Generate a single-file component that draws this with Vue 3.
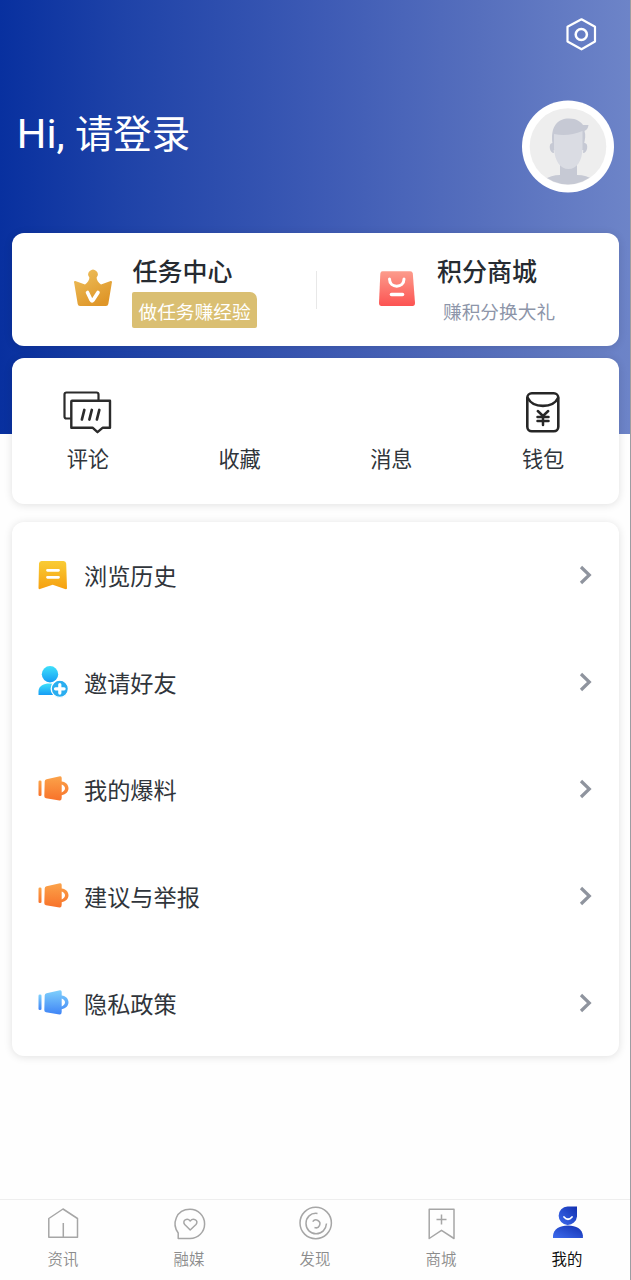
<script setup>
const shortcuts = [
  { label: '评论', icon: 'comment' },
  { label: '收藏', icon: '' },
  { label: '消息', icon: '' },
  { label: '钱包', icon: 'wallet' },
]
const rows = [
  { label: '浏览历史', icon: 'history' },
  { label: '邀请好友', icon: 'invite' },
  { label: '我的爆料', icon: 'cup', fill: 'url(#orange)' },
  { label: '建议与举报', icon: 'cup', fill: 'url(#orange)' },
  { label: '隐私政策', icon: 'cup', fill: 'url(#sky)' },
]
const tabs = [
  { label: '资讯', icon: 'home' },
  { label: '融媒', icon: 'heart' },
  { label: '发现', icon: 'discover' },
  { label: '商城', icon: 'shop' },
  { label: '我的', icon: 'me', active: true },
]
</script>

<template>
  <div class="page">
    <svg class="defs" width="0" height="0">
      <defs>
        <linearGradient id="gold" x1="0" y1="0" x2=".6" y2="1"><stop offset="0" stop-color="#eec15f" /><stop offset="1" stop-color="#df9628" /></linearGradient>
        <linearGradient id="coral" x1="0" y1="0" x2="0" y2="1"><stop offset="0" stop-color="#fc9c8c" /><stop offset="1" stop-color="#fc5352" /></linearGradient>
        <linearGradient id="yellow" x1="0" y1="0" x2="0" y2="1"><stop offset="0" stop-color="#f9cc35" /><stop offset="1" stop-color="#f6a010" /></linearGradient>
        <linearGradient id="cyan" x1="0" y1="0" x2="0" y2="1"><stop offset="0" stop-color="#3fe0fa" /><stop offset="1" stop-color="#169cf5" /></linearGradient>
        <linearGradient id="orange" x1="0" y1="0" x2="0" y2="1"><stop offset="0" stop-color="#fba34a" /><stop offset="1" stop-color="#f8722a" /></linearGradient>
        <linearGradient id="sky" x1="0" y1="0" x2="0" y2="1"><stop offset="0" stop-color="#7fd0fc" /><stop offset="1" stop-color="#3f84f6" /></linearGradient>
        <linearGradient id="royal" x1="0" y1="1" x2="1" y2="0"><stop offset="0" stop-color="#3e6cee" /><stop offset="1" stop-color="#1230b0" /></linearGradient>
      </defs>
    </svg>

    <header class="top">
      <svg class="gear" width="34" height="36" viewBox="0 0 34 36" fill="none" stroke="#fff">
        <path d="M17.500 3.300 31 10.800V25.500L17.500 33.300 3.500 25.500V10.800Z" stroke-width="2.200" stroke-linejoin="round" />
        <circle cx="17.300" cy="18.500" r="5.600" stroke-width="2.500" />
      </svg>
      <div class="profile">
        <h1><span class="latin">Hi, </span>请登录</h1>
        <svg class="avatar" width="93" height="93" viewBox="0 0 93 93">
          <defs><clipPath id="face"><circle cx="46" cy="46.500" r="38" /></clipPath></defs>
          <circle cx="46" cy="46.500" r="46" fill="#fff" />
          <circle cx="46" cy="46.500" r="38.300" fill="#eee" />
          <g clip-path="url(#face)">
            <path d="M38 64H55V75Q65 75 71 80V86H22V80Q29 75 38 75Z" fill="#c6c9d4" />
            <path d="M31 43C26 42 27 53 32 53M62 43C67 42 66 53 61 53" fill="#c6c9d4" />
            <path d="M30.500 44C28 26 36 18.500 47 18.500C55 18.500 59 22 61 25H66.500C66 29 64 30 62.500 31C64 35 63 40 62 44V50H31V44Z" fill="#c6c9d4" />
            <path d="M32 34Q46 37 60.500 31V49C60 61 55 69 46.500 69S33 61 32 49Z" fill="#dadce3" />
          </g>
        </svg>
      </div>
    </header>

    <section class="card promo">
      <div class="promo-item">
        <svg class="promo-icon" width="40" height="40" viewBox="0 0 40 40">
          <path d="M1.200 15C.5 13.500 1.500 12.500 3 13.300L12 16.500C14.500 14.500 16.600 12 16.400 9.500A4.700 4.700 0 1 1 23.600 9.500C23.400 12 25.500 14.500 28 16.500L37 13.300C38.500 12.500 39.500 13.500 38.800 15L35.300 36Q35 38 33 38H7Q5 38 4.700 36Z" fill="url(#gold)" />
          <path d="M14.500 24.500 18.200 32.200Q19 33.600 20 32.200L25 24.500" fill="none" stroke="#fff" stroke-width="3.600" stroke-linecap="round" stroke-linejoin="round" />
        </svg>
        <div class="promo-text">
          <strong>任务中心</strong>
          <span class="badge">做任务赚经验</span>
        </div>
      </div>
      <div class="divider"></div>
      <div class="promo-item second">
        <svg class="promo-icon" width="40" height="40" viewBox="0 0 40 40">
          <path d="M5.500 3.300H33.300Q35.500 3.300 35.800 5.500L38 35Q38 38 35.500 38H4.500Q2 38 2 35L3.300 5.700Q3.500 3.300 5.500 3.300Z" fill="url(#coral)" />
          <path d="M12.500 11C12.500 20.500 27 20.500 27 11" fill="none" stroke="#fff" stroke-width="3" stroke-linecap="round" />
          <path d="M14.500 26.500H25.500" stroke="#fff" stroke-width="3.600" stroke-linecap="round" />
        </svg>
        <div class="promo-text">
          <strong>积分商城</strong>
          <span class="badge plain">赚积分换大礼</span>
        </div>
      </div>
    </section>

    <section class="card shortcuts">
      <div v-for="s in shortcuts" :key="s.label" class="shortcut">
        <div class="shortcut-icon">
          <svg v-if="s.icon === 'comment'" width="52" height="46" viewBox="0 0 52 46" fill="none" stroke="#2b2b2b" stroke-width="2.200">
            <path d="M8.800 29.500H4.500Q2.500 29.500 2.500 27.500V5.500Q2.500 3.500 4.500 3.500H34.500Q36.500 3.500 36.500 5.500V11" />
            <path d="M10 11.800H48V38.700H40.800L35.500 43.200 30.500 38.700H9.300V12.500Q9.300 11.800 10 11.800Z" stroke-width="2.400" stroke-linejoin="round" />
            <path d="M22.300 21 19.900 30.500M29.800 21 27.400 30.500M37.300 21 34.900 30.500" stroke-width="2.700" stroke-linecap="round" />
          </svg>
          <svg v-else-if="s.icon === 'wallet'" width="36" height="46" viewBox="0 0 36 46" fill="none" stroke="#262626" stroke-width="2.600" stroke-linecap="round">
            <rect x="2.300" y="4.300" width="31" height="38" rx="4.500" />
            <path d="M2.800 9C8 19.500 28 19.500 33 9" />
            <path d="M12.800 22 18 27 23.200 22M18 27V36M12.500 28H23.500M12.500 32H23.500" stroke-width="2.500" />
          </svg>
        </div>
        <span>{{ s.label }}</span>
      </div>
    </section>

    <section class="card list">
      <div v-for="r in rows" :key="r.label" class="row">
        <svg class="row-icon" width="32" height="34" viewBox="0 0 32 34">
          <g v-if="r.icon === 'history'">
            <path d="M4.500 3H26.500Q29 3 29.200 5.500L30 30.500Q29.500 31.500 28 31L15.700 26.800 3 31Q1.500 31.500 1.500 30L2 5.500Q2.200 3 4.500 3Z" fill="url(#yellow)" />
            <path d="M10.500 12.300H21.500M10.500 19.300H21.500" stroke="#fff" stroke-width="2.800" stroke-linecap="round" />
          </g>
          <g v-else-if="r.icon === 'invite'">
            <circle cx="13" cy="9.300" r="8.200" fill="url(#cyan)" />
            <path d="M1.500 30V26C2 20.500 7 18.500 12 18.500C17 18.500 20 19.500 22 22V30Z" fill="url(#cyan)" />
            <circle cx="22.800" cy="23.800" r="8.600" fill="#2aaef0" stroke="#fff" stroke-width="1.300" />
            <path d="M22.800 19.500V28.100M18.500 23.800H27.100" stroke="#fff" stroke-width="3.200" stroke-linecap="round" />
          </g>
          <g v-else :fill="r.fill">
            <rect x="1.500" y="8.500" width="3" height="15.500" rx="1.300" />
            <path d="M9.500 7.200 23 4.200Q24.700 4 24.700 6V9.500C29 10 31.500 13 31.500 16.300S29 22.500 24.700 23.300V26Q24.500 28.800 22.500 28.500L9 26.300Q7.200 26 7.300 24L7.700 9.500Q7.800 7.600 9.500 7.200ZM24.700 12.400V20.400C27 19.500 28 18 28 16.300S27 13.300 24.700 12.400Z" fill-rule="evenodd" />
          </g>
        </svg>
        <span class="row-label">{{ r.label }}</span>
        <svg class="chevron" width="14" height="20" viewBox="0 0 14 20" fill="none" stroke="#8f949e" stroke-width="3.200">
          <path d="M2 2 10.300 10 2 18" />
        </svg>
      </div>
    </section>

    <nav class="tabs">
      <div v-for="t in tabs" :key="t.label" class="tab" :class="{ active: t.active }">
        <svg width="36" height="36" viewBox="0 0 36 36" fill="none" stroke="#a6a6a6" stroke-width="1.500" stroke-linejoin="round">
          <path v-if="t.icon === 'home'" d="M3.800 12.500 18 3 32.500 12.500V31.200H3.800ZM18.300 31V17" />
          <g v-else-if="t.icon === 'heart'">
            <path d="M7.200 32.500V27C.5 18 5 3.300 19 3.300A14.600 14.600 0 0 1 19 32.500Z" />
            <path d="M19.200 24 13.700 18.500C10.700 14.500 16.200 11.500 19.200 15C22.200 11.500 28.200 14.500 25 18.500Z" />
          </g>
          <g v-else-if="t.icon === 'discover'">
            <circle cx="18.700" cy="17" r="15.700" />
            <path d="M20.500 7.500C13.500 6.500 9 11.500 9 17.500C9 23.500 13.500 27.800 19 27.800C25 27.800 29 23.500 29.500 17.500M15.700 15.700A3.900 3.900 0 1 1 17.500 21.500" />
          </g>
          <path v-else-if="t.icon === 'shop'" d="M6.200 3.300H31V32.500L18.500 24.300 6.200 32.500ZM18.500 8.500V18.500M13.500 13.500H23.500" />
          <g v-else stroke="none" fill="url(#royal)">
            <path d="M18.500 .5H28V10.500A9.200 9.200 0 1 1 18.500 .5Z" />
            <path d="M4 32V29.500C4.700 23 10.700 19.500 19 19.500S33.200 23 33.900 29.500V32Z" />
            <path d="M15 11Q19 15.500 23 11" fill="none" stroke="#fff" stroke-width="1.800" stroke-linecap="round" />
          </g>
        </svg>
        <span>{{ t.label }}</span>
      </div>
    </nav>
  </div>
</template>

<style>
body { margin: 0; }
</style>

<style scoped>
.page {
  box-sizing: border-box;
  width: 631px;
  height: 1280px;
  display: flex;
  flex-direction: column;
  overflow: hidden;
  border-right: 1px solid #9c9da2;
  font-family: "Noto Sans CJK SC", sans-serif;
  color: #30353b;
  background: #fefefe linear-gradient(90deg, #08309f 0%, #1f43a8 20%, #3e5bb5 52%, #566fbd 76%, #6d84c8 100%) 0 0 / 100% 434px no-repeat;
}
.defs { position: absolute; }
.top {
  height: 233px;
  box-sizing: border-box;
  padding: 16px 15px 0 16px;
  display: flex;
  flex-direction: column;
}
.gear { align-self: flex-end; margin-right: 17px; }
.profile { display: flex; justify-content: space-between; margin-top: 48px; }
h1 { margin: 3px 0 0 .8px; font-size: 38.4px; font-weight: 400; line-height: 56px; color: #fff; }
.latin { font-family: Roboto, sans-serif; font-size: 41.500px; line-height: 1; }
.card {
  flex: none;
  box-sizing: border-box;
  margin: 0 11px 0 12px;
  border-radius: 12px;
  background: #fff;
  box-shadow: 0 1px 9px rgba(0, 0, 0, .12);
}
.promo { height: 113px; display: flex; align-items: center; }
.promo-item { flex: 1; display: flex; align-items: center; padding-left: 61px; }
.promo-item.second { padding-left: 60px; }
.promo-icon { margin-bottom: 4px; }
.promo-text { margin-left: 19px; display: flex; flex-direction: column; align-items: flex-start; }
.promo-text strong { font-size: 25px; line-height: 36px; font-weight: 500; margin: 0 0 4px .5px; color: #262b31; }
.second .promo-text { margin-left: 20px; }
.badge {
  padding: 1px 6.500px 0;
  font-size: 18.700px;
  line-height: 35px;
  color: #fff;
  background: #dabf72;
  border-radius: 2px 7px 2px 2px;
}
.badge.plain { background: none; color: #8d95a9; }
.divider { width: 1px; height: 38px; background: #e8e8e8; }
.shortcuts { height: 146px; margin-top: 12px; padding-top: 31px; display: flex; }
.shortcut { flex: 1; display: flex; flex-direction: column; align-items: center; font-size: 21.200px; line-height: 30px; }
.shortcut-icon { height: 46px; margin-bottom: 8px; }
.list { height: 534px; margin-top: 18px; display: flex; flex-direction: column; }
.row { flex: 1; display: flex; align-items: center; padding: 0 26px 0 24.500px; }
.row-icon { flex: none; }
.row-label { flex: 1; margin: 0 0 0 15.500px; font-size: 23.200px; line-height: 34px; }
.tabs { height: 81px; box-sizing: border-box; margin-top: auto; flex: none; display: flex; border-top: 1px solid #eee; background: #fefefe; }
.tab { flex: 1; padding-top: 6px; display: flex; flex-direction: column; align-items: center; font-size: 15.400px; line-height: 22px; font-weight: 350; color: #8c8c8c; }
.tab span { margin-top: 5px; }
.tab.active { color: #111; font-weight: 400; }
</style>
